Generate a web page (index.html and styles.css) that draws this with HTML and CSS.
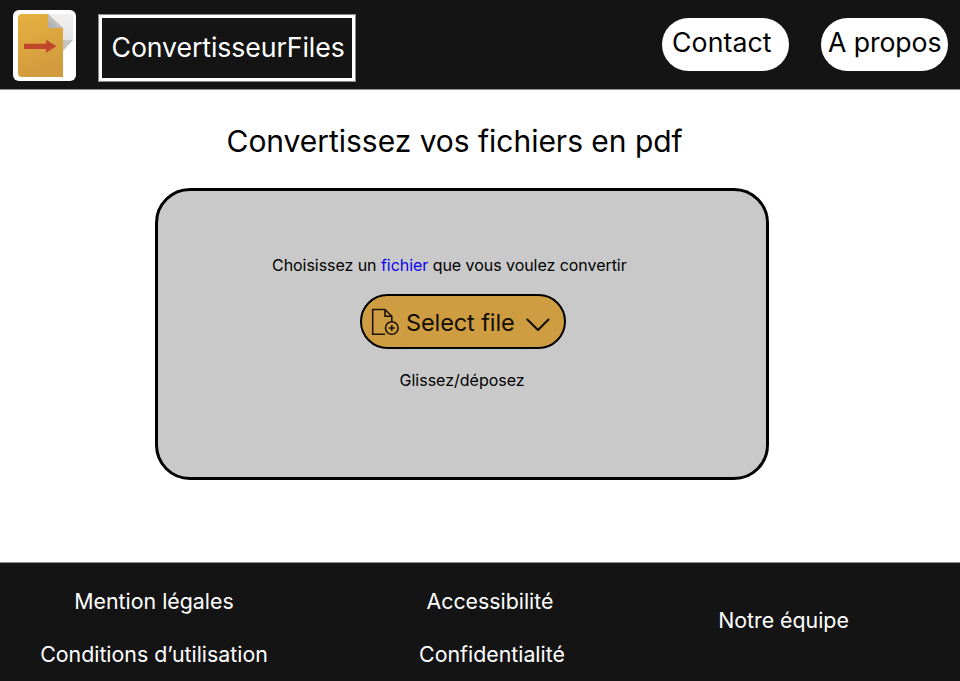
FILE: index.html
```html
<!DOCTYPE html>
<html lang="fr">
<head>
<meta charset="utf-8">
<title>ConvertisseurFiles</title>
<link rel="stylesheet" href="styles.css">
</head>
<body>
<header class="header">
  <svg class="logo" width="63" height="71" viewBox="0 0 63 71" aria-hidden="true">
    <defs>
      <linearGradient id="gold" x1="0" y1="0" x2="0.3" y2="1"><stop offset="0" stop-color="#e6b13f"/><stop offset="1" stop-color="#d19b3e"/></linearGradient>
      <linearGradient id="paper" x1="0" y1="0" x2="0" y2="1"><stop offset="0" stop-color="#f0f0f0"/><stop offset="1" stop-color="#dfdfdf"/></linearGradient>
      <linearGradient id="fold" x1="0" y1="1" x2="1" y2="0"><stop offset="0" stop-color="#a9a9a9"/><stop offset="1" stop-color="#dcdcdc"/></linearGradient>
    </defs>
    <rect width="63" height="71" rx="6" fill="#fff"/>
    <path d="M35 4H57Q60 4 60 7V30L50 40H35Z" fill="url(#paper)"/>
    <path d="M50 30H60L50 41Z" fill="#c4c4c4"/>
    <path d="M5 8Q5 4 9 4H35L50 18V67H9Q5 67 5 63Z" fill="url(#gold)"/>
    <path d="M35 4V18H50Z" fill="url(#fold)"/>
    <path d="M11 33.800H33V29.800L43.500 36.200L33 42.800V39H11Z" fill="#c0472b"/>
  </svg>
  <h1 class="brand"><span>ConvertisseurFiles</span></h1>
  <nav class="nav">
    <a class="pill pill-contact">Contact</a>
    <a class="pill pill-about">A propos</a>
  </nav>
</header>
<main class="main">
  <h2 class="title">Convertissez vos fichiers en pdf</h2>
  <section class="dropzone">
    <p class="hint">Choisissez un <a class="link">fichier</a> que vous voulez convertir</p>
    <button class="select">
      <svg width="28" height="28" viewBox="0 0 28 28" fill="none" stroke="#1d1406" stroke-width="1.600" aria-hidden="true">
        <path d="M14 26.200H1.700V1.500H14L20.800 8.300V13M14 1.500V8.300H20.800"/>
        <circle cx="20.800" cy="20" r="6.300"/>
        <path d="M17.800 20H23.800M20.800 17V23"/>
      </svg>
      <span class="select-label">Select file</span>
      <svg class="chevron" width="24" height="14" viewBox="0 0 24 14" fill="none" stroke="#120c02" stroke-width="2" stroke-linecap="round" stroke-linejoin="round" aria-hidden="true"><path d="M1.300 1.500L12 12L22.500 1.500"/></svg>
    </button>
    <p class="drop">Glissez/déposez</p>
  </section>
</main>
<footer class="footer">
  <div class="col col-legal"><a>Mention légales</a><a>Conditions d’utilisation</a></div>
  <div class="col col-privacy"><a class="access">Accessibilité</a><a>Confidentialité</a></div>
  <div class="col col-team"><a>Notre équipe</a></div>
</footer>
</body>
</html>
```
FILE: styles.css
```css
* { box-sizing: border-box; }
body {
  margin: 0;
  height: 681px;
  display: flex;
  flex-direction: column;
  font-family: Inter, "Liberation Sans", sans-serif;
  color: #000;
  background: #fff;
  overflow: hidden;
}
h1, h2, p { margin: 0; font-weight: 400; }
.header {
  height: 90px;
  flex: none;
  display: flex;
  align-items: flex-start;
  padding: 10px 12px 0 13px;
  background: #141414;
  border-bottom: 1px solid #8f8f8f;
}
.logo { flex: none; }
.brand {
  width: 256px;
  height: 66px;
  margin: 5px 0 0 23px;
  padding-left: 9.500px;
  border: 3px solid #fff;
  outline: 1px solid #8a8a8a;
  color: #fff;
  font-size: 26.67px;
  letter-spacing: -0.08px;
  line-height: 59px;
  white-space: nowrap;
}
.nav { display: flex; gap: 32px; margin: 8px 0 0 auto; }
.pill {
  width: 127px;
  height: 53px;
  border-radius: 27px;
  background: #fff;
  font-size: 26.67px;
  line-height: 48px;
  white-space: nowrap;
}
.pill-contact { padding-left: 10px; letter-spacing: 0.1px; }
.pill-about { padding-left: 7px; letter-spacing: -0.1px; }
.main { flex: 1; }
.title {
  margin: 31px 0 0 226.5px;
  font-size: 30px;
  letter-spacing: -0.03px;
  line-height: 41px;
  white-space: nowrap;
}
.dropzone {
  width: 614px;
  height: 292px;
  margin: 26px 0 0 155px;
  padding-top: 64px;
  display: flex;
  flex-direction: column;
  align-items: flex-start;
  border: 3px solid #000;
  border-radius: 35px;
  background: #c9c9c9;
  font-size: 16px;
  line-height: 20px;
  white-space: nowrap;
}
.hint { margin-left: 114px; letter-spacing: -0.05px; }
.link { color: #0c05ec; }
.select {
  width: 206px;
  height: 55px;
  margin: 19px 0 0 202px;
  padding: 0 0 0 9px;
  display: flex;
  align-items: center;
  border: 2px solid #000;
  border-radius: 28px;
  background: #ce9d41;
  color: #120c02;
  font: 23.5px Inter, "Liberation Sans", sans-serif;
}
.select-label { margin: 2px 0 0 7px; letter-spacing: -0.1px; }
.chevron { margin: 6px 0 0 11.500px; }
.drop { margin: 21px 0 0 241.500px; }
.footer {
  height: 119px;
  flex: none;
  display: grid;
  grid-template-columns: 308px 368px 1fr;
  background: #141414;
  border-top: 1px solid #8f8f8f;
  color: #fff;
  font-size: 21.33px;
  line-height: 28px;
  white-space: nowrap;
}
.col { display: flex; flex-direction: column; align-items: center; gap: 25px; padding-top: 24px; }
.access { margin-right: 4px; }
.col-team { padding-top: 43px; padding-right: 69px; }
```
